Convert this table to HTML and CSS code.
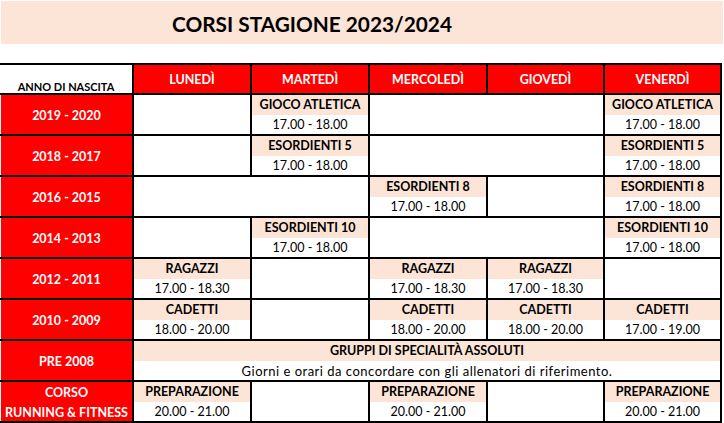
FILE: index.html
```html
<!DOCTYPE html>
<html lang="it">
<head>
<meta charset="utf-8">
<title>Corsi stagione 2023/2024</title>
<link rel="stylesheet" href="styles.css">
</head>
<body>
<div class="banner"><h1 class="title">CORSI STAGIONE 2023/2024</h1></div>
<div class="sched">
  <div class="corner">ANNO DI NASCITA</div>
  <div class="day">LUNEDÌ</div>
  <div class="day">MARTEDÌ</div>
  <div class="day">MERCOLEDÌ</div>
  <div class="day">GIOVEDÌ</div>
  <div class="day">VENERDÌ</div>

  <div class="year">2019 - 2020</div>
  <div class="empty"></div>
  <div class="slot"><div class="lbl">GIOCO ATLETICA</div><div class="time">17.00 - 18.00</div></div>
  <div class="empty span2"></div>
  <div class="slot"><div class="lbl">GIOCO ATLETICA</div><div class="time">17.00 - 18.00</div></div>

  <div class="year">2018 - 2017</div>
  <div class="empty"></div>
  <div class="slot"><div class="lbl">ESORDIENTI 5</div><div class="time">17.00 - 18.00</div></div>
  <div class="empty span2"></div>
  <div class="slot"><div class="lbl">ESORDIENTI 5</div><div class="time">17.00 - 18.00</div></div>

  <div class="year">2016 - 2015</div>
  <div class="empty span2"></div>
  <div class="slot"><div class="lbl">ESORDIENTI 8</div><div class="time">17.00 - 18.00</div></div>
  <div class="empty"></div>
  <div class="slot"><div class="lbl">ESORDIENTI 8</div><div class="time">17.00 - 18.00</div></div>

  <div class="year">2014 - 2013</div>
  <div class="empty"></div>
  <div class="slot"><div class="lbl">ESORDIENTI 10</div><div class="time">17.00 - 18.00</div></div>
  <div class="empty span2"></div>
  <div class="slot"><div class="lbl">ESORDIENTI 10</div><div class="time">17.00 - 18.00</div></div>

  <div class="year">2012 - 2011</div>
  <div class="slot"><div class="lbl">RAGAZZI</div><div class="time">17.00 - 18.30</div></div>
  <div class="empty"></div>
  <div class="slot"><div class="lbl">RAGAZZI</div><div class="time">17.00 - 18.30</div></div>
  <div class="slot"><div class="lbl">RAGAZZI</div><div class="time">17.00 - 18.30</div></div>
  <div class="empty"></div>

  <div class="year">2010 - 2009</div>
  <div class="slot"><div class="lbl">CADETTI</div><div class="time">18.00 - 20.00</div></div>
  <div class="empty"></div>
  <div class="slot"><div class="lbl">CADETTI</div><div class="time">18.00 - 20.00</div></div>
  <div class="slot"><div class="lbl">CADETTI</div><div class="time">18.00 - 20.00</div></div>
  <div class="slot"><div class="lbl">CADETTI</div><div class="time">17.00 - 19.00</div></div>

  <div class="year">PRE 2008</div>
  <div class="slot span5"><div class="lbl">GRUPPI DI SPECIALITÀ ASSOLUTI</div><div class="time note">Giorni e orari da concordare con gli allenatori di riferimento.</div></div>

  <div class="year year2"><div class="yl1">CORSO</div><div class="yl2">RUNNING &amp; FITNESS</div></div>
  <div class="slot"><div class="lbl">PREPARAZIONE</div><div class="time">20.00 - 21.00</div></div>
  <div class="empty"></div>
  <div class="slot"><div class="lbl">PREPARAZIONE</div><div class="time">20.00 - 21.00</div></div>
  <div class="empty"></div>
  <div class="slot"><div class="lbl">PREPARAZIONE</div><div class="time">20.00 - 21.00</div></div>
</div>
</body>
</html>
```

FILE: styles.css
```css
* { box-sizing: border-box; }
html, body {
  margin: 0;
  padding: 0;
  background: #fff;
  font-family: Lato, "Open Sans", sans-serif;
  color: #000;
}
.banner {
  margin: 1px 1px 0 1px;
  height: 43px;
  background: #fce4d6;
  padding: 3px 0 0 171px;
}
.title {
  margin: 0;
  font-size: 20.8px;
  font-weight: 700;
  line-height: 40px;
}
.sched {
  margin-top: 19px;
  width: 722px;
  display: grid;
  grid-template-columns: 132px 116px 116px 116px 115px 115px;
  grid-template-rows: 28px repeat(8, 39px);
  gap: 2px;
  padding: 2px 2px 2px 0;
  background: #000;
  font-size: 12.5px;
}
.corner {
  background: #fff;
  font-size: 11px;
  font-weight: 700;
  display: flex;
  align-items: flex-end;
  justify-content: center;
  line-height: 11px;
  padding-bottom: 1px;
}
.day {
  background: #ff0000;
  color: #fff;
  font-weight: 700;
  display: flex;
  align-items: center;
  justify-content: center;
}
.year {
  background: #ff0000;
  color: #fff;
  font-weight: 700;
  border-left: 1px solid #fff;
  display: flex;
  align-items: center;
  justify-content: center;
  padding-top: 1px;
}
.year2 {
  flex-direction: column;
  align-items: stretch;
  justify-content: flex-start;
  text-align: center;
  padding-top: 0;
}
.yl1 { height: 20px; line-height: 21px; }
.yl2 { height: 19px; line-height: 21px; white-space: nowrap; }
.empty { background: #fff; }
.span2 { grid-column: span 2; }
.span5 { grid-column: span 5; }
.slot {
  display: flex;
  flex-direction: column;
  background: #fff;
  text-align: center;
  white-space: nowrap;
}
.lbl {
  height: 20px;
  line-height: 20px;
  background: #fce4d6;
  font-weight: 700;
}
.time {
  height: 19px;
  line-height: 20px;
}
.note {
  font-size: 13px;
  letter-spacing: 0.5px;
}
```
